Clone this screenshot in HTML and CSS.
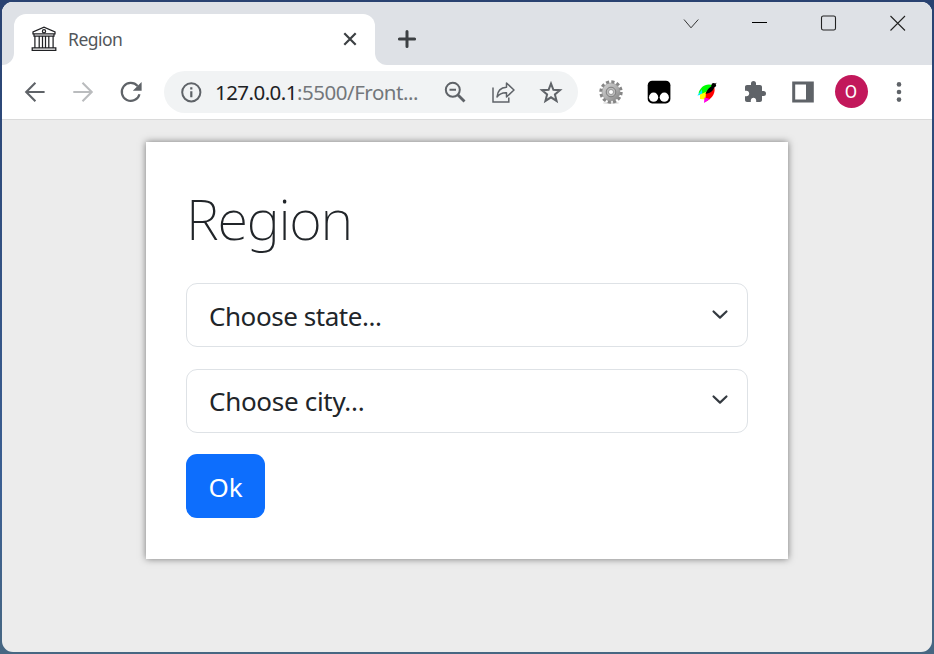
FILE: index.html
```html
<!DOCTYPE html>
<html lang="en">
<head>
<meta charset="utf-8">
<title>Region</title>
<link rel="stylesheet" href="styles.css">
</head>
<body>
<div class="window">
  <header class="tabstrip">
    <div class="tab-edge"></div>
    <div class="tab">
      <svg class="favicon" width="26" height="26" viewBox="0 0 26 26" fill="none" stroke="#202124" stroke-width="1.25">
        <path d="M2 7.8V5.9L13 1.200l11 4.700v1.900zM3 8v2h20V8M1.200 21.800h23.600v2.600H1.200z"/>
        <circle cx="13" cy="5.200" r="1.600"/>
        <path d="M3.900 10v12M8.200 10v12M11.500 10v12M14.500 10v12M17.800 10v12M22.100 10v12"/>
      </svg>
      <span class="tab-title">Region</span>
      <svg class="tab-close" width="16" height="16" viewBox="0 0 16 16" stroke="#3c4043" stroke-width="2.200"><path d="M2.300 2.300l11.400 11.400M13.700 2.300L2.300 13.700"/></svg>
    </div>
    <div class="strip-rest">
      <svg width="20" height="20" viewBox="0 0 20 20" stroke="#3c4043" stroke-width="3" stroke-linecap="round"><path d="M2.400 10h15.200M10 2.400v15.200"/></svg>
      <div class="controls">
        <svg width="18" height="18" viewBox="0 0 18 18" fill="none" stroke="#333"><path d="M2 5.500l7 8.300 7.300-8.300"/></svg>
        <svg width="18" height="18" viewBox="0 0 18 18" fill="none" stroke="#000"><path d="M1 8.500h15"/></svg>
        <svg width="18" height="18" viewBox="0 0 18 18" fill="none" stroke="#222" stroke-width="1.100"><rect x="1.500" y="2" width="14" height="14" rx="1.800"/></svg>
        <svg width="18" height="18" viewBox="0 0 18 18" fill="none" stroke="#222" stroke-width="1.100"><path d="M1.500 2L16 16.500M16 2L1.500 16.500"/></svg>
      </div>
    </div>
  </header>

  <nav class="toolbar">
    <div class="cells">
      <svg viewBox="0 0 24 24" fill="none" stroke="#5f6368" stroke-width="2.100"><path d="M21.600 12H3.300M12.400 2.800L3.200 12l9.200 9.200"/></svg>
      <svg viewBox="0 0 24 24" fill="none" stroke="#babcbe" stroke-width="2.100"><path d="M2.300 12h18.300M11.500 2.800l9.200 9.200-9.200 9.200"/></svg>
      <svg viewBox="0 0 24 24" fill="none" stroke="#5f6368" stroke-width="2.200"><path d="M20.500 14.200A9 9 0 1 1 18.600 6"/><path d="M22.600 2v8.800h-8.800z" fill="#5f6368" stroke="none"/></svg>
    </div>
    <div class="omnibox">
      <svg class="info" viewBox="0 0 24 24" fill="none" stroke="#5f6368" stroke-width="2"><circle cx="12.300" cy="12.300" r="9.100"/><path d="M12.300 11.200v6M12.300 7.200v2.200" stroke-width="2.200"/></svg>
      <span class="url"><b>127.0.0.1</b>:5500/Front...</span>
      <div class="cells">
        <svg viewBox="0 0 24 24" fill="none" stroke="#5f6368" stroke-width="2"><circle cx="9.800" cy="9.800" r="7"/><path d="M15 15l6.500 6.500" stroke-width="2.800"/><path d="M6.500 9.700h6.500"/></svg>
        <svg viewBox="0 0 24 24" fill="none" stroke="#5f6368" stroke-width="1.500"><path d="M2 7.500V22h15.800v-4.500"/><path d="M6 17C6.500 11 10 7.500 15.500 7.300V3l7.500 7-7.500 7v-4.200C11 12.600 8.200 14 6 17z" stroke-linejoin="round"/></svg>
        <svg viewBox="0 0 24 24" fill="none" stroke="#5f6368" stroke-width="2"><path d="M12 3.600l2.400 6.200 6.600.4-5.100 4.200 1.700 6.500-5.600-3.600-5.600 3.600 1.700-6.500L3 10.200l6.600-.4z"/></svg>
      </div>
    </div>
    <div class="cells">
      <svg viewBox="0 0 24 24">
        <defs><linearGradient id="steel" x2="1" y2="1"><stop stop-color="#d4d4d4"/><stop offset=".5" stop-color="#b2b2b2"/><stop offset="1" stop-color="#808080"/></linearGradient></defs>
        <ellipse cx="12" cy="23" rx="8" ry="1" fill="#ddd"/>
        <circle cx="12" cy="12" r="10" fill="none" stroke="#858585" stroke-width="3.400" stroke-dasharray="3.100 2.136"/>
        <circle cx="12" cy="12" r="9" fill="url(#steel)" stroke="#909090" stroke-width=".6"/>
        <circle cx="12" cy="12" r="4.800" fill="#bbb" stroke="#777" stroke-width=".9"/>
        <circle cx="12" cy="12" r="2.500" fill="#fff" stroke="#888" stroke-width=".8"/>
      </svg>
      <svg viewBox="0 0 24 24"><rect x=".700" y=".700" width="22.700" height="22.700" rx="4.500"/><circle cx="6.600" cy="17.200" r="4.600" fill="#fff"/><circle cx="17.300" cy="17.200" r="4.600" fill="#fff"/></svg>
      <svg viewBox="0 0 24 24">
        <path d="M18.500 5.500C11 2.500 5 7 3.500 13.500l8 1.500z" fill="#0f0"/>
        <path d="M7 9.500L2.300 15.500l5-1z" fill="#0ef"/>
        <path d="M12 11.500L5 14.500v4.500l6 .5z" fill="#ff0"/>
        <path d="M19 6c2 6-1 12.500-9 16L11 13z" fill="#f00"/>
        <path d="M9.500 17.500l5.500 1.500-6 4z" fill="#f0e"/>
        <path d="M19.500 5c0 5-4 8.500-9 8.800C12 10 15 6 19.500 5z"/>
        <circle cx="18.700" cy="5.300" r="2.300"/><path d="M19 5l2.300-1.600" stroke="#000"/>
      </svg>
      <svg viewBox="0 0 24 24" fill="#5f6368"><path d="M20.500 11H19V7c0-1.100-.9-2-2-2h-4V3.500a2.500 2.500 0 0 0-5 0V5H4c-1.100 0-2 .9-2 2v3.800h1.500c1.500 0 2.700 1.200 2.700 2.700S5 16.200 3.500 16.200H2V20c0 1.100.9 2 2 2h3.800v-1.500c0-1.500 1.200-2.700 2.700-2.700s2.700 1.200 2.700 2.700V22H17c1.100 0 2-.9 2-2v-4h1.500a2.500 2.500 0 0 0 0-5z"/></svg>
      <svg viewBox="0 0 24 24"><path fill="#5f6368" fill-rule="evenodd" d="M1.200 1.500h21.600v21H1.200zM4.200 4.500v15h10.800v-15z"/></svg>
      <span class="avatar">O</span>
      <svg viewBox="0 0 24 24" fill="#5f6368"><circle cx="12" cy="4.400" r="2.300"/><circle cx="12" cy="12" r="2.300"/><circle cx="12" cy="19.600" r="2.300"/></svg>
    </div>
  </nav>

  <main class="page">
    <form class="card">
      <h1>Region</h1>
      <div class="select"><span>Choose state...</span><svg width="22" height="22" viewBox="0 0 16 16" fill="none" stroke="#343a40" stroke-width="1.600" stroke-linecap="round" stroke-linejoin="round"><path d="M3.300 6.200L8 10.600l4.700-4.400"/></svg></div>
      <div class="select city"><span>Choose city...</span><svg width="22" height="22" viewBox="0 0 16 16" fill="none" stroke="#343a40" stroke-width="1.600" stroke-linecap="round" stroke-linejoin="round"><path d="M3.300 6.200L8 10.600l4.700-4.400"/></svg></div>
      <button type="button">Ok</button>
    </form>
  </main>
</div>
</body>
</html>
```
FILE: styles.css
```css
* { box-sizing: border-box; }
html { height: 100%; }
body {
  margin: 0;
  height: 654px;
  padding: 2px;
  overflow: hidden;
  background: linear-gradient(#294271, #3b5f92 75%, #476782);
  font-family: "Noto Sans", "Open Sans", sans-serif;
}
svg { display: block; flex: none; }
.window {
  height: 650px;
  border-radius: 11px;
  overflow: hidden;
  background: #ececec;
  display: flex;
  flex-direction: column;
}
.tabstrip { height: 63px; display: flex; background: #fff; }
.tab-edge { width: 12px; background: #dee1e6; border-bottom-right-radius: 12px; }
.tab {
  width: 361px;
  display: flex;
  align-items: center;
  padding: 0 17px;
  background: linear-gradient(#dee1e6, #dee1e6) top / 100% 30px no-repeat;
  position: relative;
  z-index: 0;
}
.tab::before {
  content: "";
  position: absolute;
  inset: 12px 0 0;
  z-index: -1;
  border-radius: 12px 12px 0 0;
  background: #fff;
}
.favicon { margin-top: 11px; }
.tab-title {
  margin: 10px auto 0 11px;
  font-size: 17.500px;
  line-height: 24px;
  font-weight: 400;
  letter-spacing: -.5px;
  color: #53575b;
}
.tab-close { margin-top: 11px; }
.strip-rest {
  flex: 1;
  display: flex;
  justify-content: space-between;
  padding: 12px 25px 0 22px;
  background: #dee1e6;
  border-bottom-left-radius: 12px;
}
.strip-rest > svg { margin-top: 15px; }
.controls { display: flex; gap: 51px; }
.toolbar {
  height: 55px;
  flex: none;
  display: flex;
  align-items: center;
  padding: 0 9px 1px;
  background: #fff;
  border-bottom: 1px solid #dadada;
}
.cells { display: grid; grid-auto-flow: column; grid-auto-columns: 48px; place-items: center; }
.cells svg, .info { width: 24px; height: 24px; }
.omnibox {
  width: 414px;
  height: 42px;
  margin: 1px 9px 0;
  padding: 0 3px 0 15px;
  border-radius: 21px;
  background: #f1f3f4;
  display: flex;
  align-items: center;
}
.url {
  flex: 1;
  padding-left: 12px;
  font-size: 20.500px;
  line-height: 28px;
  letter-spacing: -.46px;
  white-space: nowrap;
  color: #73777b;
}
.url b { font-weight: 400; letter-spacing: -.55px; color: #202124; }
.avatar {
  width: 33px;
  height: 33px;
  border-radius: 50%;
  background: #c2185b;
  color: #fff;
  font: 18px/33px Roboto, sans-serif;
  text-align: center;
}
.page { flex: 1; padding: 22px 144px; }
.card {
  height: 417px;
  padding: 40px;
  background: #fff;
  box-shadow: 0 0 7px rgba(0, 0, 0, .5);
}
h1 {
  margin: 0 0 21px;
  height: 80px;
  font-size: 56px;
  line-height: 72px;
  font-weight: 200;
  letter-spacing: -1.300px;
  color: #212529;
}
.select {
  height: 64px;
  margin-bottom: 22px;
  padding: 2px 16px 0 22px;
  border: 1px solid #dee2e6;
  border-radius: 11px;
  display: flex;
  align-items: center;
  justify-content: space-between;
  font-size: 26px;
  letter-spacing: -.45px;
  color: #212529;
}
.select svg { margin-top: -4px; }
.select.city { padding-top: 0; letter-spacing: -.3px; }
.select + button { margin-top: -1px; }
button {
  display: block;
  width: 79px;
  height: 64px;
  padding: 1px 0 0;
  border: 0;
  border-radius: 11px;
  background: #0d6efd;
  color: #fff;
  font: 26px/60px "Noto Sans", sans-serif;
}
```
